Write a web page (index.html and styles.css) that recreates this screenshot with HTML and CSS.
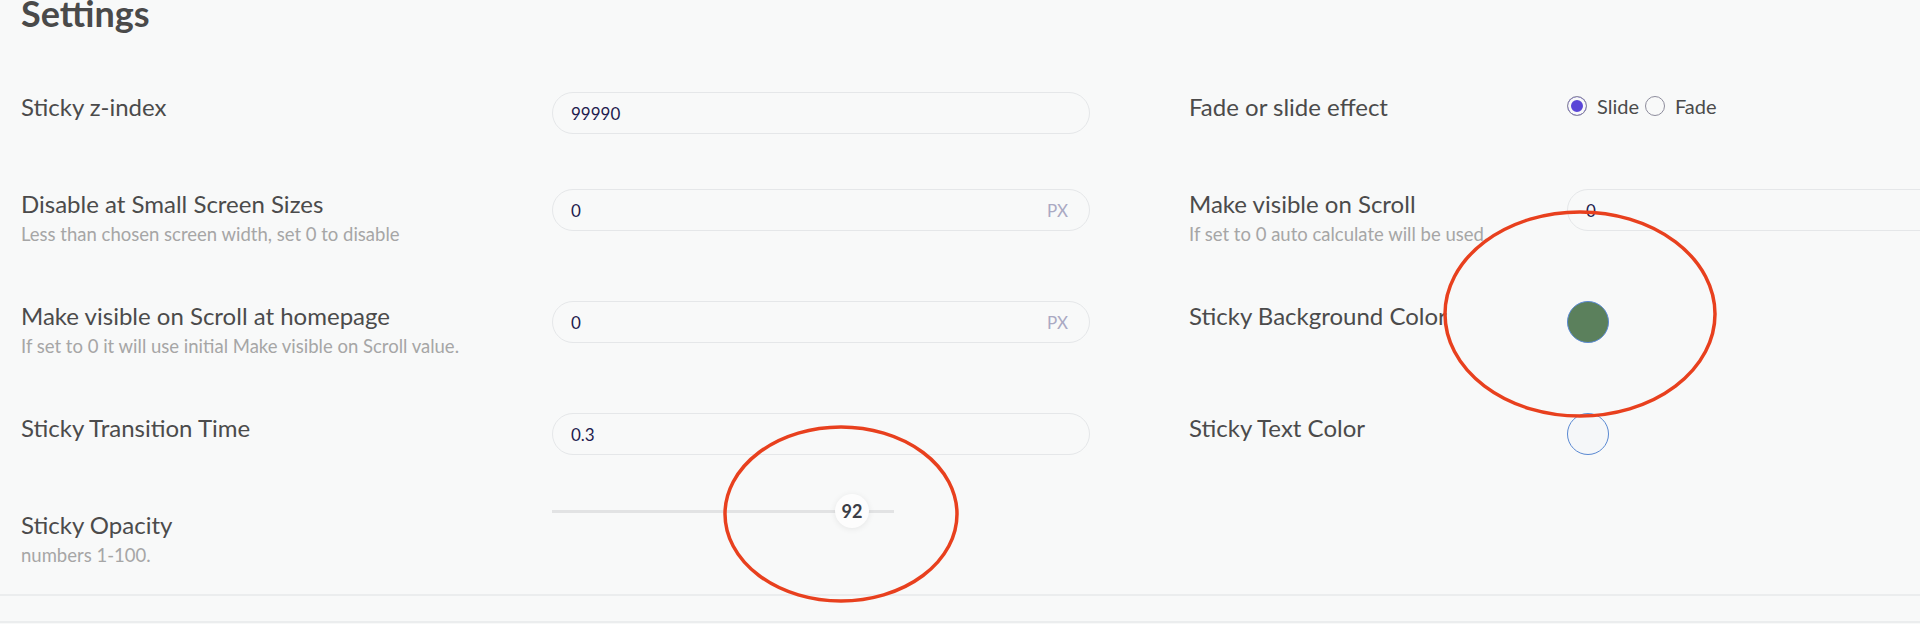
FILE: index.html
```html
<!DOCTYPE html>
<html lang="en">
<head>
    <meta charset="UTF-8">
    <meta name="viewport" content="width=device-width, initial-scale=1.0">
    <title>Settings</title>
    <link rel="stylesheet" href="styles.css">
</head>
<body>
    <div class="settings">
        <h2 class="settings-title">Settings</h2>

        <div class="settings-grid">
            <!-- row 1 -->
            <div class="field">
                <div class="field-label">
                    <label for="zIndex">Sticky z-index</label>
                </div>
                <div class="input-wrap">
                    <input type="text" id="zIndex" value="99990">
                </div>
            </div>
            <div class="field field-right">
                <div class="field-label">
                    <label>Fade or slide effect</label>
                </div>
                <div class="radio-group">
                    <label class="radio"><input type="radio" name="effect" checked> Slide</label><label class="radio"><input type="radio" name="effect"> Fade</label>
                </div>
            </div>

            <!-- row 2 -->
            <div class="field">
                <div class="field-label">
                    <label for="smallScreen">Disable at Small Screen Sizes</label>
                    <div class="field-desc">Less than chosen screen width, set 0 to disable</div>
                </div>
                <div class="input-wrap">
                    <input type="text" id="smallScreen" value="0">
                    <span class="unit">PX</span>
                </div>
            </div>
            <div class="field field-right">
                <div class="field-label">
                    <label for="visibleScroll">Make visible on Scroll</label>
                    <div class="field-desc">If set to 0 auto calculate will be used.</div>
                </div>
                <div class="input-wrap">
                    <input type="text" id="visibleScroll" value="0">
                    <span class="unit">PX</span>
                </div>
            </div>

            <!-- row 3 -->
            <div class="field">
                <div class="field-label">
                    <label for="visibleHome">Make visible on Scroll at homepage</label>
                    <div class="field-desc">If set to 0 it will use initial Make visible on Scroll value.</div>
                </div>
                <div class="input-wrap">
                    <input type="text" id="visibleHome" value="0">
                    <span class="unit">PX</span>
                </div>
            </div>
            <div class="field field-right">
                <div class="field-label">
                    <label>Sticky Background Color</label>
                </div>
                <span class="swatch" style="background-color: #5b805c;"></span>
            </div>

            <!-- row 4 -->
            <div class="field">
                <div class="field-label">
                    <label for="transition">Sticky Transition Time</label>
                </div>
                <div class="input-wrap">
                    <input type="text" id="transition" value="0.3">
                </div>
            </div>
            <div class="field field-right">
                <div class="field-label">
                    <label>Sticky Text Color</label>
                </div>
                <span class="swatch" style="background-color: #f5f7f9;"></span>
            </div>

            <!-- row 5 -->
            <div class="field">
                <div class="field-label">
                    <label>Sticky Opacity</label>
                    <div class="field-desc">numbers 1-100.</div>
                </div>
                <div class="range">
                    <div class="range-track"></div>
                    <div class="range-thumb" style="left: 300px;">92</div>
                </div>
            </div>
        </div>
    </div>

    <div class="settings-footer"></div>

    <!-- red marks drawn over the screenshot -->
    <svg class="marks" width="1920" height="624" viewBox="0 0 1920 624">
        <ellipse cx="1580" cy="314" rx="135" ry="102" />
        <ellipse cx="841" cy="514" rx="116" ry="87" />
    </svg>
</body>
</html>
```

FILE: styles.css
```css
html, body {
    margin: 0;
    overflow: hidden;
}
body {
    position: relative;
    font-family: Lato, "Open Sans", sans-serif;
    background-color: #f8f9f9;
    color: #4b4b4b;
    height: 624px;
}
.settings {
    padding: 0 0 27px 21px;
}
.settings-title {
    margin: -8px 0 57px;
    font-size: 36px;
    font-weight: 700;
    line-height: 43px;
    color: #4a4a4a;
}
.settings-grid {
    display: grid;
    grid-template-columns: 1069px 916px;
    column-gap: 99px;
    row-gap: 55px;
    align-items: start;
}
.field {
    display: flex;
    align-items: flex-start;
}
.field-label {
    width: 531px;
    flex-shrink: 0;
}
.field-right .field-label {
    width: 378px;
}
.field-label label {
    display: block;
    font-size: 24px;
    line-height: 29px;
    color: #4b4b4b;
    white-space: nowrap;
}
.field-desc {
    margin-top: 5px;
    font-size: 18.5px;
    line-height: 23px;
    color: #a6a6a6;
    white-space: nowrap;
}
.input-wrap {
    display: flex;
    align-items: center;
    width: 538px;
    height: 42px;
    box-sizing: border-box;
    border: 1px solid #e5e7e9;
    border-radius: 21px;
    background-color: #f8f9f9;
    flex-shrink: 0;
}
.input-wrap input {
    flex: 1;
    min-width: 0;
    border: none;
    background: transparent;
    padding: 0 18px;
    font-family: Lato, "Open Sans", sans-serif;
    font-size: 17px;
    color: #1e1c4e;
    outline: none;
}
.unit {
    margin-right: 21px;
    font-family: Lato, "Open Sans", sans-serif;
    font-size: 17px;
    color: #aaa9c3;
}
.radio-group {
    display: flex;
    align-items: center;
    height: 28px;
}
.radio {
    display: inline-flex;
    align-items: center;
    margin-right: 6px;
    font-size: 20px;
    color: #4b4b4b;
}
.radio input {
    appearance: none;
    -webkit-appearance: none;
    width: 20px;
    height: 20px;
    margin: 0 10px 0 0;
    border: 1.5px solid #8d8c9c;
    border-radius: 50%;
    background-color: #f8f9f9;
}
.radio input:checked {
    background-color: #5a46d7;
    box-shadow: inset 0 0 0 3px #f8f9f9;
}
.swatch {
    display: block;
    width: 42px;
    height: 42px;
    box-sizing: border-box;
    border: 1px solid #5a89d2;
    border-radius: 50%;
}
.range {
    position: relative;
    width: 342px;
    height: 34px;
    margin-top: -16px;
    display: flex;
    align-items: center;
}
.range-track {
    width: 100%;
    height: 3px;
    background-color: #e2e3e4;
}
.range-thumb {
    position: absolute;
    top: 0;
    width: 34px;
    height: 34px;
    transform: translateX(-50%);
    border-radius: 50%;
    background-color: #fdfdfd;
    box-shadow: 0 1px 6px rgba(0, 0, 0, 0.08);
    font-size: 18px;
    font-weight: 700;
    line-height: 34px;
    text-align: center;
    color: #3b3e46;
}
.settings-footer {
    border-top: 2px solid #ebedee;
    height: 25px;
    border-bottom: 2px solid #ebedee;
    background-color: #f8f9f9;
}
.marks {
    position: absolute;
    top: 0;
    left: 0;
    pointer-events: none;
}
.marks ellipse {
    fill: none;
    stroke: #e8401e;
    stroke-width: 3.5;
}
```
